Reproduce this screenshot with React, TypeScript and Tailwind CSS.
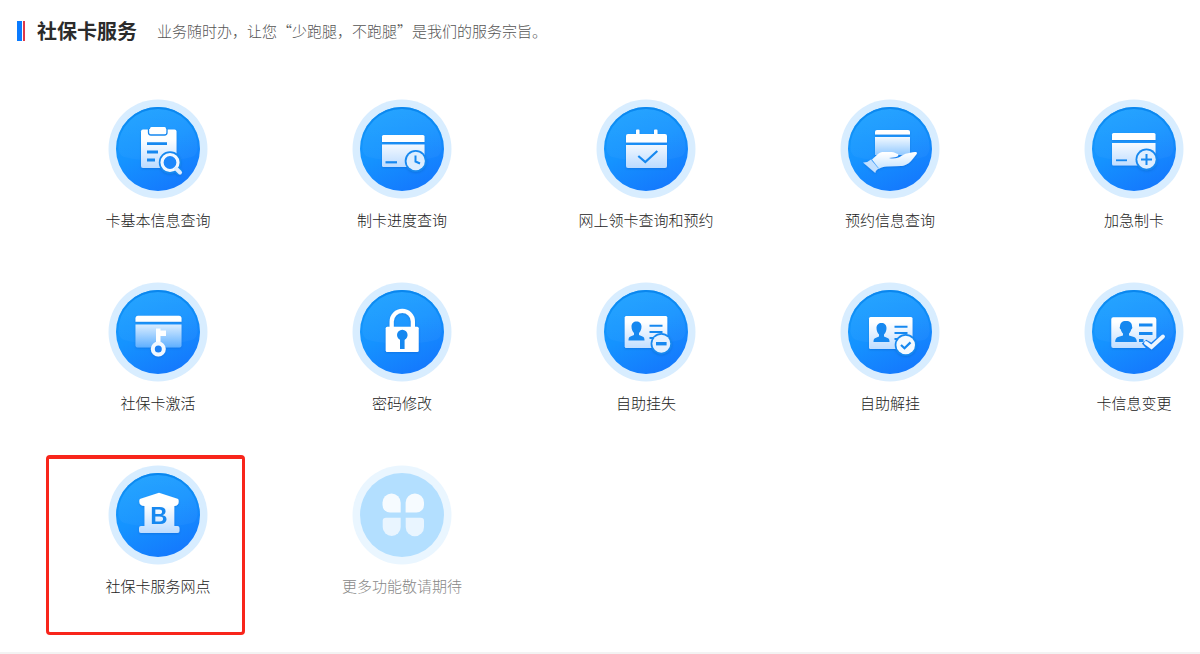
import type { ReactNode } from "react";

const BLUE = "#1688f0";
const FILL = "url(#icon-fill)";
const FADE = "url(#icon-fade)";

function SharedDefs() {
  return (
    <svg className="absolute size-0" aria-hidden="true">
      <defs>
        <linearGradient id="disc" x1="0.25" y1="0" x2="0.75" y2="1">
          <stop offset="0" stopColor="#189fff" />
          <stop offset="0.45" stopColor="#1593ff" />
          <stop offset="1" stopColor="#1477fd" />
        </linearGradient>
        <linearGradient id="rim" x1="0" y1="0" x2="0" y2="1">
          <stop offset="0" stopColor="#0a86ee" />
          <stop offset="0.6" stopColor="#0a86ee" stopOpacity="0" />
        </linearGradient>
        <linearGradient id="gloss" x1="0" y1="0" x2="0" y2="1">
          <stop offset="0" stopColor="#ffffff" stopOpacity="0.06" />
          <stop offset="1" stopColor="#ffffff" stopOpacity="0.03" />
        </linearGradient>
        <linearGradient id="icon-fill" gradientUnits="userSpaceOnUse" x1="0" y1="40" x2="0" y2="72">
          <stop offset="0" stopColor="#ffffff" />
          <stop offset="1" stopColor="#b4d7ff" />
        </linearGradient>
        <linearGradient id="icon-hand" gradientUnits="userSpaceOnUse" x1="0" y1="54" x2="0" y2="72">
          <stop offset="0" stopColor="#ffffff" />
          <stop offset="1" stopColor="#bfe0ff" />
        </linearGradient>
        <linearGradient id="icon-fade" gradientUnits="userSpaceOnUse" x1="0" y1="38" x2="0" y2="66">
          <stop offset="0" stopColor="#f2f9ff" />
          <stop offset="1" stopColor="#5caeff" />
        </linearGradient>
        <filter id="icon-shadow" x="-20%" y="-20%" width="140%" height="150%">
          <feDropShadow dx="0" dy="1" stdDeviation="1" floodColor="#0657b8" floodOpacity="0.35" />
        </filter>
      </defs>
    </svg>
  );
}

function Disc({ children, muted = false }: { children: ReactNode; muted?: boolean }) {
  return (
    <svg viewBox="0 0 100 100" className="size-[100px]" aria-hidden="true">
      <circle cx="50" cy="50" r="49.500" fill={muted ? "#eaf6ff" : "#d8edff"} />
      <circle cx="50" cy="50" r="42" fill={muted ? "#b3dfff" : "url(#disc)"} />
      {!muted && (
        <>
          <path d="M10.500 48a39.500 38 0 0 1 79 0c0 5-2 9-6 10-20 5-46 5-67 0-4-1-6-5-6-10z" fill="url(#gloss)" />
          <circle cx="50" cy="50" r="41" fill="none" stroke="url(#rim)" strokeWidth="2" />
        </>
      )}
      <g filter={muted ? undefined : "url(#icon-shadow)"}>{children}</g>
    </svg>
  );
}

const ClipboardSearch = () => (
  <>
    <path d="M35 30.500h31.500a2 2 0 0 1 2 2V69H35a2 2 0 0 1-2-2V32.500a2 2 0 0 1 2-2z" fill={FILL} />
    <path d="M40.500 30v3.500a2.500 2.500 0 0 0 2.500 2.500h13.500a2.500 2.500 0 0 0 2.500-2.500V30" fill="#fff" stroke={BLUE} strokeWidth="1.300" />
    <rect x="42" y="28" width="16" height="5.500" rx="1.500" fill="#fff" />
    <path d="M39 44.700h20M39 53h11M39 61h8" stroke={BLUE} strokeWidth="2.800" />
    <circle cx="62" cy="63.500" r="11.200" fill={BLUE} />
    <path d="M68 70l4.500 4" stroke={BLUE} strokeWidth="7" />
    <circle cx="62" cy="63.500" r="8" fill="#1b87fb" stroke="#f2f8ff" strokeWidth="3.200" />
    <path d="M68 69.500l4 4" stroke="#dcecff" strokeWidth="4" strokeLinecap="round" />
  </>
);

const CardClock = () => (
  <>
    <path d="M31.500 36h39.500a1.500 1.500 0 0 1 1.500 1.500V43H30v-5.500a1.500 1.500 0 0 1 1.500-1.500z" fill="#fff" />
    <path d="M30 45.500h42.500V66.500a1.500 1.500 0 0 1-1.500 1.500H31.500a1.500 1.500 0 0 1-1.500-1.500z" fill={FILL} />
    <path d="M33.500 63.300H45" stroke={BLUE} strokeWidth="2.200" />
    <circle cx="63.700" cy="62" r="11" fill={BLUE} />
    <circle cx="63.700" cy="62" r="9.200" fill="#ddeeff" />
    <path d="M63.500 56.500v6l4.500 2" fill="none" stroke={BLUE} strokeWidth="2" />
  </>
);

const CalendarCheck = () => (
  <>
    <path d="M40 35v-3.500q0-1 1-1h1.500q1 0 1 1V35h14.500v-3.500q0-1 1-1h1.500q1 0 1 1V35H69a2 2 0 0 1 2 2v6.500H30V37a2 2 0 0 1 2-2z" fill="#fff" />
    <path d="M30 46h41v21a2 2 0 0 1-2 2H32a2 2 0 0 1-2-2z" fill={FILL} />
    <path d="M42.300 57l7 6 12-11" fill="none" stroke={BLUE} strokeWidth="2.200" />
  </>
);

const CardInHand = () => (
  <>
    <path d="M37 31h31a2 2 0 0 1 2 2v2.500H35V33a2 2 0 0 1 2-2z" fill="#fff" />
    <path d="M35 38h35v18H35z" fill={FADE} />
    <path d="M32 60.500l6-5.500c2-1.800 4-2 6.500-2h7c3 0 4 1.500 6.500 2 .8 1.500-.2 2.700-2 3l-7 1c4 1.200 10 .5 13-2.500l3.500-1.800c3.500-.8 6.500-1.200 9.500-1.700 2-.3 2.500.8 1.500 2.300l-5 6.200c-4 4.300-7 5.300-11 5.500L47 67.500c-3.500.2-6 1-8.500 2.500z" fill="url(#icon-hand)" />
    <path d="M23 63.500q4.500.3 8-3l7.500 9q-2.700 1.800-3.200 4.500z" fill="#c3e0ff" />
    <path d="M31.300 60.200l7.400 9.200" stroke="#5caeff" strokeWidth="0.800" />
  </>
);

const CardPlus = () => (
  <>
    <path d="M29.500 34h40.500a1.500 1.500 0 0 1 1.500 1.500V41H28v-5.500a1.500 1.500 0 0 1 1.500-1.500z" fill="#fff" />
    <path d="M28 44h43.500v21a1.500 1.500 0 0 1-1.500 1.500H29.500A1.500 1.500 0 0 1 28 65z" fill={FILL} />
    <path d="M32 61.300h11" stroke={BLUE} strokeWidth="1.800" />
    <circle cx="62.500" cy="60.500" r="11" fill={BLUE} />
    <circle cx="62.500" cy="60.500" r="9.200" fill="#ddeeff" />
    <path d="M57 60.500h11M62.500 55v11" stroke={BLUE} strokeWidth="2" />
  </>
);

const CardKey = () => (
  <>
    <path d="M30 33.700h41a2.500 2.500 0 0 1 2.500 2.500v3.500h-46v-3.500a2.500 2.500 0 0 1 2.500-2.500z" fill="#fff" />
    <path d="M27.500 42.500h46v21a2 2 0 0 1-2 2h-42a2 2 0 0 1-2-2z" fill={FADE} />
    <path d="M48 46.500h4.500v2h5.500V54h-5.500v9H48z" fill="#fff" />
    <circle cx="50.300" cy="67" r="5.500" fill="#1b80f5" stroke="#f2f8ff" strokeWidth="4" />
  </>
);

const Lock = () => (
  <>
    <path d="M39.700 47v-7.500a10.600 10.600 0 0 1 21.200 0V47" fill="none" stroke="#fff" strokeWidth="4.200" />
    <rect x="33.700" y="44.700" width="33" height="25.300" rx="1.500" fill="#fff" />
    <circle cx="50.300" cy="53" r="5.300" fill={BLUE} />
    <path d="M50.300 54v13" stroke={BLUE} strokeWidth="4.600" />
  </>
);

const Person = () => (
  <path d="M40.500 39.500c-3 0-5 2-5 5 0 3 1 5 2.500 6.500v2l-3.500 1.500c-1.500.7-2 1.500-2 4h16c0-2.500-.5-3.300-2-4L43 53v-2c1.500-1.500 2.500-3.500 2.500-6.500 0-3-2-5-5-5z" fill={BLUE} />
);

const IdMinus = () => (
  <>
    <rect x="28.700" y="34" width="42.600" height="32" rx="1.500" fill={FILL} />
    <Person />
    <path d="M53.500 43.700h13M53.500 50h13M53.500 56h8" stroke={BLUE} strokeWidth="2" />
    <circle cx="65.300" cy="61.700" r="10.700" fill={BLUE} />
    <circle cx="65.300" cy="61.700" r="9" fill="#e3f0ff" />
    <path d="M60 61.700h10.600" stroke={BLUE} strokeWidth="3.400" />
  </>
);

const IdCheck = () => (
  <>
    <rect x="29" y="35" width="43.500" height="32" rx="1.500" fill={FILL} />
    <g transform="translate(1 1.500)">
      <Person />
    </g>
    <path d="M54.500 44.700h13M54.500 51h13M54.500 57h8" stroke={BLUE} strokeWidth="2" />
    <circle cx="65.700" cy="63" r="11" fill={BLUE} />
    <circle cx="65.700" cy="63" r="9.300" fill="#f5faff" />
    <path d="M61 63l3.500 3.200 6-5.800" fill="none" stroke={BLUE} strokeWidth="2.200" />
  </>
);

const IdChange = () => (
  <>
    <path d="M29.300 35.300h41a2 2 0 0 1 2 2V56l-5 4.500-5-2.800-4.500 3.800 4 4.500H29.300a2 2 0 0 1-2-2V37.300a2 2 0 0 1 2-2z" fill={FILL} />
    <path d="M42 39c-4 0-6 2-6 5.500-.8 1 0 2.500.8 3 .5 2 1.500 3.500 2.200 4v2l-5 1.500c-2 1-2.800 2.500-2.800 5h21.600c0-2.500-.8-4-2.800-5l-5-1.500v-2c.7-.5 1.700-2 2.200-4 .8-.5 1.600-2 .8-3 0-3.500-2-5.500-6-5.500z" fill={BLUE} />
    <path d="M55 43h13.500M55 51.500h13.500M55 58.500h4.500" stroke={BLUE} strokeWidth="2.800" />
    <path d="M62 61l5.500 4 11.500-10.500" fill="none" stroke="#eef6ff" strokeWidth="3.800" strokeLinecap="round" />
  </>
);

const Bank = () => (
  <>
    <path d="M51 27.700l18.500 6c1.200.4 1.200 1.500 1.200 3 0 2.500-1.500 4.300-4.400 4.300v20h3.200a2 2 0 0 1 2 2V66a2 2 0 0 1-2 2H33a2 2 0 0 1-2-2v-3a2 2 0 0 1 2-2h3.500V41c-3.500 0-5.200-1.800-5.200-4.300 0-1.500 0-2.600 1.200-3z" fill={FILL} />
    <text x="51" y="59" textAnchor="middle" className="font-['Liberation_Sans',sans-serif] text-[24px] font-bold" fill={BLUE}>
      B
    </text>
  </>
);

const Petals = () => (
  <g fill="#e9f5ff">
    <path d="M39.500 28.500a9.200 9.200 0 0 1 9.200 9.200V47.500H38a7.500 7.500 0 0 1-7.500-7.500v-2.500a9 9 0 0 1 9-9z" fill="#f6fbff" />
    <path d="M62.800 28.500a9.200 9.200 0 0 0-9.200 9.200V47.500h10.900a7.500 7.500 0 0 0 7.500-7.500v-2.500a9 9 0 0 0-9.200-9z" fill="#f6fbff" />
    <path d="M48.700 52.700V62a9 9 0 0 1-18 0v-6a3.300 3.300 0 0 1 3.300-3.300z" />
    <path d="M53.700 52.700V62a9 9 0 0 0 18.300 0v-6a3.300 3.300 0 0 0-3.300-3.300z" />
  </g>
);

type Service = { label: string; icon: ReactNode; muted?: boolean; marked?: boolean };

const services: Service[] = [
  { label: "卡基本信息查询", icon: <ClipboardSearch /> },
  { label: "制卡进度查询", icon: <CardClock /> },
  { label: "网上领卡查询和预约", icon: <CalendarCheck /> },
  { label: "预约信息查询", icon: <CardInHand /> },
  { label: "加急制卡", icon: <CardPlus /> },
  { label: "社保卡激活", icon: <CardKey /> },
  { label: "密码修改", icon: <Lock /> },
  { label: "自助挂失", icon: <IdMinus /> },
  { label: "自助解挂", icon: <IdCheck /> },
  { label: "卡信息变更", icon: <IdChange /> },
  { label: "社保卡服务网点", icon: <Bank />, marked: true },
  { label: "更多功能敬请期待", icon: <Petals />, muted: true },
];

function ServiceItem({ label, icon, muted, marked }: Service) {
  return (
    <li className="relative flex justify-center">
      <a href="#" className="flex flex-col items-center gap-2.5">
        <Disc muted={muted}>{icon}</Disc>
        <span className={muted ? "text-[15px] leading-[22px] whitespace-nowrap text-[#888888]" : "text-[15px] leading-[22px] whitespace-nowrap text-[#222222]"}>
          {label}
        </span>
      </a>
      {marked && (
        <span className="pointer-events-none absolute -top-2.5 right-[35px] -bottom-[38px] left-2.5 rounded border-3 border-t-4 border-[#f8251b]" />
      )}
    </li>
  );
}

export default function App() {
  return (
    <main className="overflow-hidden border-b-2 border-[#f3f3f3] bg-white pt-4 pb-[55px] font-['Noto_Sans_CJK_SC',sans-serif] font-light">
      <SharedDefs />
      <header className="flex h-[30px] items-center pl-[17px]">
        <span className="flex h-5 gap-px">
          <span className="w-[5px] bg-[#0a7bff]" />
          <span className="w-0.5 bg-[#e0394a]" />
        </span>
        <h1 className="ml-3 text-xl leading-[30px] font-bold text-[#2b2b2b]">社保卡服务</h1>
        <p className="ml-5 text-[15px] leading-[30px] text-[#555555]">业务随时办，让您“少跑腿，不跑腿”是我们的服务宗旨。</p>
      </header>
      <ul className="-mr-14 ml-9 mt-[53px] grid grid-cols-5 gap-y-[51px]">
        {services.map((service) => (
          <ServiceItem key={service.label} {...service} />
        ))}
      </ul>
    </main>
  );
}
